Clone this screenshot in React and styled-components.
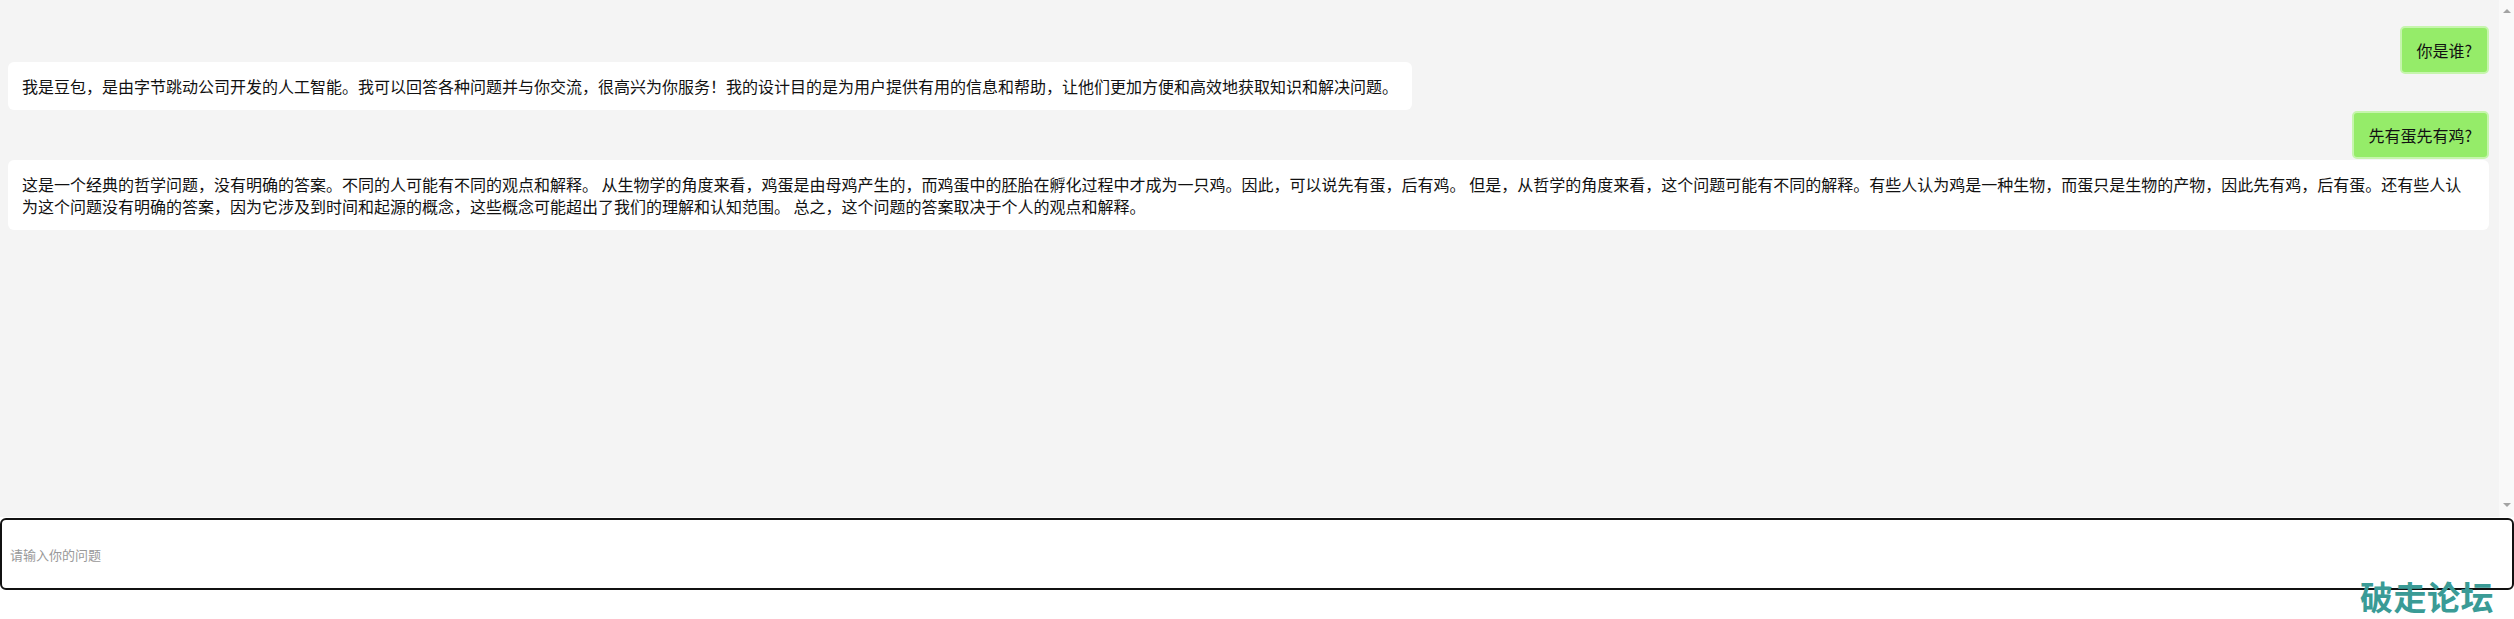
import React from "react";
import styled, { createGlobalStyle } from "styled-components";

const GlobalStyle = createGlobalStyle`
    html, body {
        margin: 0;
        padding: 0;
        background: #ffffff;
    }
    body {
        font-family: "Noto Sans CJK SC", "Noto Sans", sans-serif;
        color: #111;
    }
`

const Page = styled.div`
    position: relative;
    display: flex;
    flex-direction: column;
    height: 619px;
    overflow: hidden;
`

const Chat = styled.div`
    display: flex;
    height: 517px;
    background: #f4f4f4;
`

const Messages = styled.div`
    flex: 1;
    display: flex;
    flex-direction: column;
    padding: 26px 10px 0 8px;
    min-width: 0;
`

const UserRow = styled.div`
    display: flex;
    justify-content: flex-end;
    margin-top: ${(p) => p.$top || 0}px;
`

const BotRow = styled.div`
    display: flex;
    justify-content: flex-start;
    margin-top: ${(p) => p.$top || 0}px;
`

const Bubble = styled.div`
    background: #95ec69;
    border: 2px solid #c6f5ad;
    border-radius: 5px;
    padding: 11px 15px 11px 14px;
    font-size: 16px;
    line-height: 22px;
    color: #111;
    white-space: nowrap;
`

const Answer = styled.div`
    background: #ffffff;
    border-radius: 6px;
    padding: 13px 14px;
    font-size: 16px;
    line-height: 22px;
    color: #111;
`

const Rail = styled.div`
    width: 15px;
    background: #f9f9f9;
    display: flex;
    flex-direction: column;
    justify-content: space-between;
    align-items: center;
    padding: 9px 0 10px;
    box-sizing: border-box;
`

const Arrow = styled.span`
    width: 0;
    height: 0;
    border-left: 4px solid transparent;
    border-right: 4px solid transparent;
    ${(p) => p.$dir === "up"
        ? "border-bottom: 4px solid #a3a3a3;"
        : "border-top: 4px solid #a3a3a3;"}
`

const Composer = styled.div`
    height: 102px;
    padding-top: 1px;
    box-sizing: border-box;
`

const Input = styled.input`
    display: block;
    width: 100%;
    height: 72px;
    box-sizing: border-box;
    border: 2px solid #111;
    border-radius: 6px;
    padding: 0 8px;
    font-family: "Noto Sans CJK SC", "Noto Sans", sans-serif;
    font-size: 13px;
    color: #111;
    background: #fff;
    outline: none;
    caret-color: #111;
    &::placeholder { color: #999; }
`

const Watermark = styled.div`
    position: absolute;
    right: 20px;
    bottom: 6px;
    font-family: "Noto Sans CJK SC", sans-serif;
    font-weight: 700;
    font-size: 33px;
    line-height: 33px;
    color: #3a9b96;
    letter-spacing: 0.5px;
`

const conversa = [
    { de: "user", texto: "你是谁?", top: 0 },
    {
        de: "bot",
        texto: "我是豆包，是由字节跳动公司开发的人工智能。我可以回答各种问题并与你交流，很高兴为你服务！我的设计目的是为用户提供有用的信息和帮助，让他们更加方便和高效地获取知识和解决问题。",
        top: -12
    },
    { de: "user", texto: "先有蛋先有鸡?", top: 1 },
    {
        de: "bot",
        texto: "这是一个经典的哲学问题，没有明确的答案。不同的人可能有不同的观点和解释。 从生物学的角度来看，鸡蛋是由母鸡产生的，而鸡蛋中的胚胎在孵化过程中才成为一只鸡。因此，可以说先有蛋，后有鸡。 但是，从哲学的角度来看，这个问题可能有不同的解释。有些人认为鸡是一种生物，而蛋只是生物的产物，因此先有鸡，后有蛋。还有些人认为这个问题没有明确的答案，因为它涉及到时间和起源的概念，这些概念可能超出了我们的理解和认知范围。 总之，这个问题的答案取决于个人的观点和解释。",
        top: 1
    }
]

export default function App() {
    return (
        <Page>
            <GlobalStyle />
            <Chat>
                <Messages>
                    {conversa.map((m, i) =>
                        m.de === "user" ? (
                            <UserRow key={i} $top={m.top}>
                                <Bubble>{m.texto}</Bubble>
                            </UserRow>
                        ) : (
                            <BotRow key={i} $top={m.top}>
                                <Answer>{m.texto}</Answer>
                            </BotRow>
                        )
                    )}
                </Messages>
                <Rail>
                    <Arrow $dir="up" />
                    <Arrow $dir="down" />
                </Rail>
            </Chat>
            <Composer>
                <Input placeholder="请输入你的问题" autoFocus />
            </Composer>
            <Watermark>破走论坛</Watermark>
        </Page>
    )
}
